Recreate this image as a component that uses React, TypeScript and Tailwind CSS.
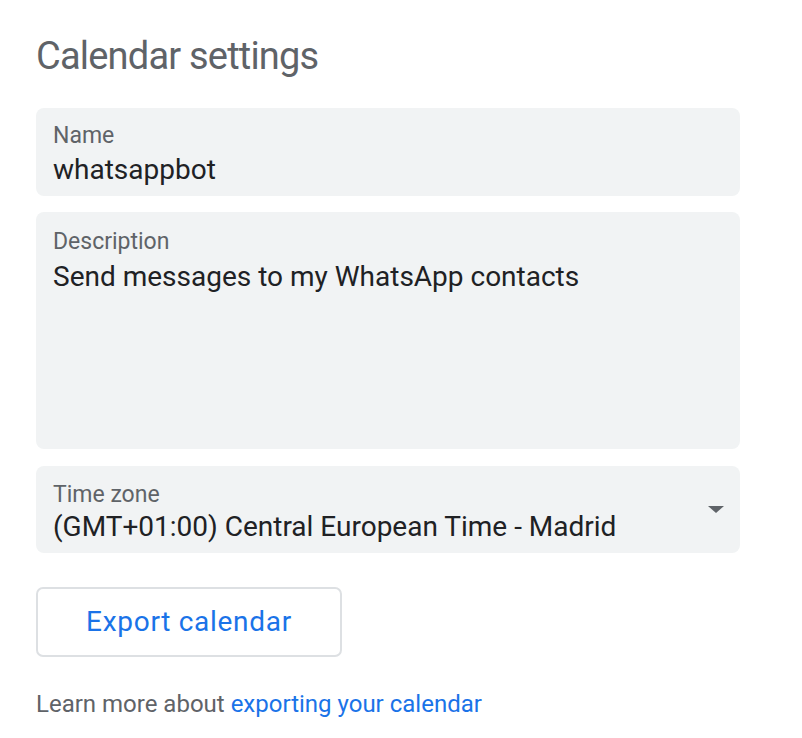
import { useState } from "react";

const font = { fontFamily: "Roboto, 'Noto Sans', sans-serif" };

export default function App() {
  const [name, setName] = useState("whatsappbot");
  const [desc, setDesc] = useState("Send messages to my WhatsApp contacts");

  return (
    <div className="min-h-screen bg-white pl-[36px] pr-[62px] pt-[34px]" style={font}>
      <h1 className="text-[38px] leading-[44px] tracking-[-0.8px] font-normal text-[#5f6368]">
        Calendar settings
      </h1>

      {/* Name */}
      <div className="mt-[30px] rounded-lg bg-[#f1f3f4] px-[17px] pt-[14px] pb-[10px]">
        <div className="text-[23px] leading-[28px] text-[#5f6368]">Name</div>
        <input
          value={name}
          onChange={(e) => setName(e.target.value)}
          className="mt-[4px] block w-full bg-transparent text-[28px] leading-[32px] h-[32px] text-[#202124] outline-none"
        />
      </div>

      {/* Description */}
      <div className="mt-[16px] h-[237px] rounded-lg bg-[#f1f3f4] px-[17px] pt-[16px] flex flex-col">
        <div className="text-[23px] leading-[28px] text-[#5f6368]">Description</div>
        <textarea
          value={desc}
          onChange={(e) => setDesc(e.target.value)}
          className="mt-[5px] block w-full flex-1 resize-none bg-transparent text-[28px] leading-[32px] text-[#202124] outline-none"
        />
      </div>

      {/* Time zone */}
      <div className="mt-[17px] h-[87px] rounded-lg bg-[#f1f3f4] pl-[17px] pr-[16px] pt-[15px] flex items-start">
        <div className="flex-1">
          <div className="text-[23px] leading-[28px] text-[#5f6368]">Time zone</div>
          <div className="mt-[2px] text-[28px] leading-[32px] text-[#202124]">
            (GMT+01:00) Central European Time - Madrid
          </div>
        </div>
        <div className="self-center -mt-[15px]">
          <svg width="16" height="7" viewBox="0 0 16 7">
            <path d="M0 0h16L8 7z" fill="#5f6368" />
          </svg>
        </div>
      </div>

      <button className="mt-[34px] flex h-[70px] w-[306px] items-center justify-center rounded-[7px] border-2 border-[#dde0e3] bg-white text-[28px] tracking-[0.7px] text-[#1a73e8]">
        Export calendar
      </button>

      <p className="mt-[33px] text-[24px] leading-[28px] text-[#5f6368]">
        Learn more about{" "}
        <a href="#" className="text-[#1a73e8]">
          exporting your calendar
        </a>
      </p>
    </div>
  );
}
